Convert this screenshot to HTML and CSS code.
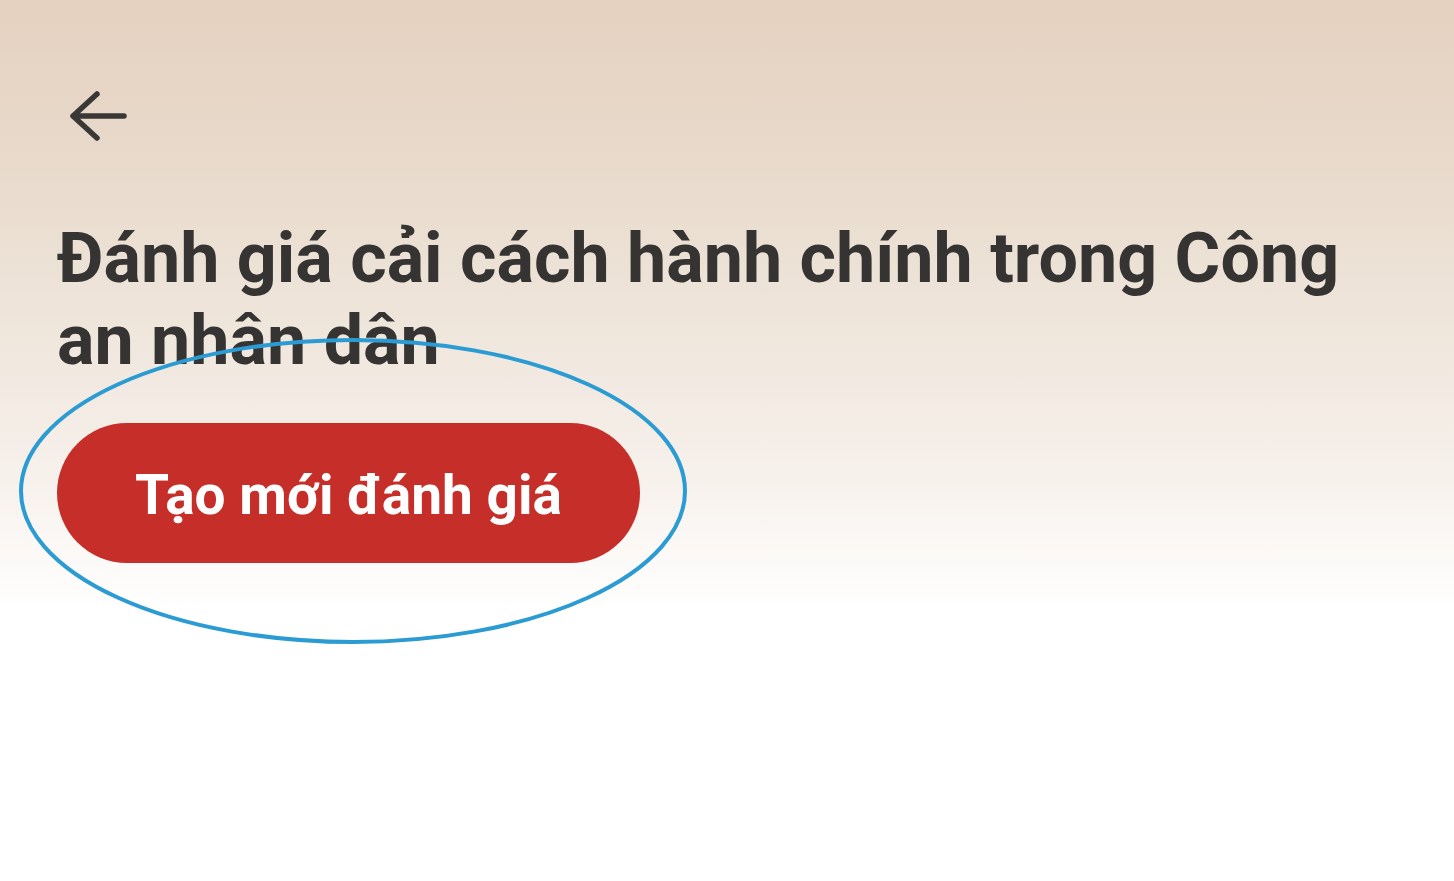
FILE: index.html
```html
<!DOCTYPE html>
<html lang="vi">
<head>
    <meta charset="UTF-8">
    <meta name="viewport" content="width=device-width, initial-scale=1.0">
    <title>Đánh giá cải cách hành chính</title>
    <link rel="stylesheet" href="styles.css">
</head>
<body>
    <div class="page">
        <div class="topbar">
            <a href="#" class="back-button" aria-label="Quay lại">
                <svg width="60" height="56" viewBox="0 0 60 56">
                    <path d="M28 6 L4 28 L28 50 M4 28 L55 28" fill="none" stroke="#3a3837" stroke-width="5.5" stroke-linecap="round" stroke-linejoin="round"/>
                </svg>
            </a>
        </div>
        <h1 class="title">Đánh giá cải cách hành chính trong Công an nhân dân</h1>
        <div class="actions">
            <button class="create-button">Tạo mới đánh giá</button>
            <svg class="highlight" width="700" height="320" viewBox="0 0 700 320">
                <ellipse cx="350" cy="160" rx="332" ry="151" fill="none" stroke="#2b9bd3" stroke-width="4"/>
            </svg>
        </div>
    </div>
</body>
</html>
```

FILE: styles.css
```css
body {
    margin: 0;
    padding: 0;
    font-family: Roboto, "Noto Sans", sans-serif;
    background: #ffffff;
}
.page {
    min-height: 881px;
    padding: 0 0 0 57px;
    background: linear-gradient(to bottom, #e5d1c0 0px, #e8d9ca 150px, #efe6dc 330px, #f7f1ec 480px, #ffffff 610px);
    box-sizing: border-box;
}
.topbar {
    padding-top: 88px;
    height: 56px;
}
.back-button {
    display: inline-block;
    margin-left: 12px;
}
.back-button svg {
    display: block;
}
.title {
    margin: 73px 0 0 0;
    max-width: 1320px;
    font-size: 70px;
    line-height: 82px;
    font-weight: 700;
    color: #363333;
}
.actions {
    position: relative;
    margin-top: 42px;
}
.create-button {
    display: block;
    width: 583px;
    height: 140px;
    padding-top: 4px;
    border: none;
    border-radius: 70px;
    background-color: #c62f29;
    color: #ffffff;
    font-family: Roboto, "Noto Sans", sans-serif;
    font-size: 55px;
    font-weight: 700;
    cursor: pointer;
}
.highlight {
    position: absolute;
    left: -54px;
    top: -92px;
    pointer-events: none;
}
```
